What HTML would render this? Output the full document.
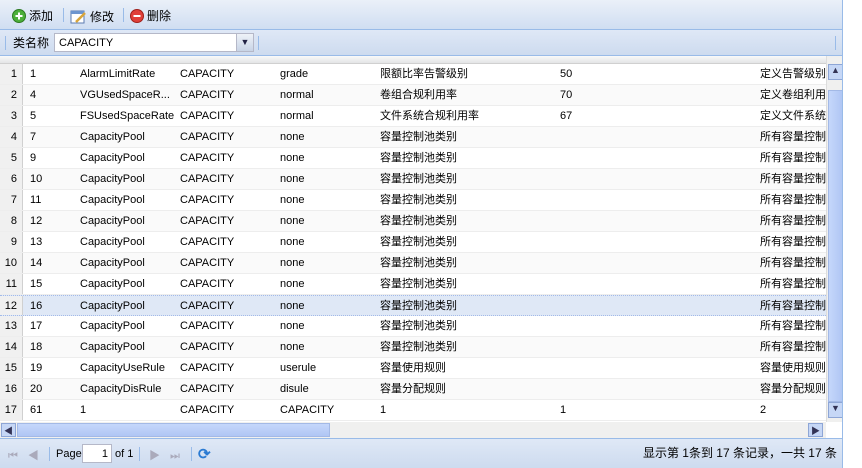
<!DOCTYPE html><html><head><meta charset="utf-8"><style>
*{box-sizing:border-box;margin:0;padding:0}
body{width:862px;height:468px;background:#fff;font:12px "Liberation Sans","Noto Sans CJK SC",sans-serif;position:relative;overflow:hidden}
.p{position:absolute;left:0;top:0;width:843px;height:468px;border-right:1px solid #99bbe8;overflow:hidden}
.tb{position:absolute;left:0;width:843px;background:linear-gradient(#dfe8f6,#cddbef);border-bottom:1px solid #99bbe8}
.sep{position:absolute;width:1px;height:14px;background:#99bbe8}
.btn{position:absolute;display:flex;align-items:center;gap:3px;font-size:12px;line-height:14px}
.hdr{position:absolute;left:0;top:56px;width:826px;height:8px;background:linear-gradient(#f9f9f9,#e3e4e6);border-bottom:1px solid #d0d0d0}
.row{position:absolute;left:0;width:826px;height:21px;border-bottom:1px solid #ededed;white-space:nowrap;font-size:11px;overflow:hidden}
.row span{position:absolute;top:3px;line-height:15px;height:15px}
.rn{position:absolute;left:0;top:0;width:23px;height:21px;background:#f0f0f0;border-right:1px solid #d0d0d0;text-align:right;padding-right:5px;padding-top:4px;line-height:13px}
.alt{background:#fafafa}
.sel{background:#dfe8f6;border-top:1px dotted #a3bae9;border-bottom:1px dotted #a3bae9}
</style></head><body><div class="p">
<div class="tb" style="top:0;height:30px;background:linear-gradient(#eaf0f8,#d0def2)">
<div class="btn" style="left:12px;top:9px"><svg width="14" height="14"><circle cx="7" cy="7" r="6.5" fill="#4caf3a" stroke="#2d7a22"/><path d="M7 3.5v7M3.5 7h7" stroke="#fff" stroke-width="2"/></svg>添加</div>
<div class="sep" style="left:63px;top:8px"></div>
<div class="btn" style="left:70px;top:9px"><svg width="17" height="15"><rect x="1" y="2" width="13" height="12" fill="#fff" stroke="#5b7bb0"/><rect x="1" y="2" width="13" height="3" fill="#6d95cf"/><path d="M6 13l9-9" stroke="#d9a53a" stroke-width="2.5"/></svg>修改</div>
<div class="sep" style="left:123px;top:8px"></div>
<div class="btn" style="left:130px;top:9px"><svg width="14" height="14"><circle cx="7" cy="7" r="6.5" fill="#e0403a" stroke="#a0201a"/><path d="M3.5 7h7" stroke="#fff" stroke-width="2"/></svg>删除</div>
</div>
<div class="tb" style="top:30px;height:26px">
<div class="sep" style="left:5px;top:6px"></div>
<div style="position:absolute;left:13px;top:6px;line-height:14px">类名称</div>
<div style="position:absolute;left:54px;top:3px;width:200px;height:19px;border:1px solid #b5b8c8;background:#fff;font-size:11px;padding:3px 4px;line-height:12px">CAPACITY</div>
<div style="position:absolute;left:236px;top:3px;width:18px;height:19px;background:linear-gradient(#eef2f8,#c8d4e6);border:1px solid #b5b8c8;text-align:center;font-size:9px;color:#224;padding-top:3px">▼</div>
<div class="sep" style="left:258px;top:6px"></div>
<div class="sep" style="left:835px;top:6px"></div>
</div>
<div class="hdr"></div>
<div id="g"></div>
<div style="position:absolute;left:826px;top:56px;width:17px;height:366px;background:#f0f0ef;border-left:1px solid #ddd">
<div style="position:absolute;left:1px;top:8px;width:15px;height:16px;background:#c6d7f6;border:1px solid #8ea6d6;font-size:9px;text-align:center;color:#335">▲</div>
<div style="position:absolute;left:1px;top:34px;width:15px;height:312px;background:linear-gradient(90deg,#c5d7fb,#b0c6f4);border:1px solid #a3b9e6"></div>
<div style="position:absolute;left:1px;top:346px;width:15px;height:16px;background:#c6d7f6;border:1px solid #8ea6d6;font-size:9px;text-align:center;color:#335">▼</div>
</div>
<div style="position:absolute;left:0;top:422px;width:826px;height:16px;background:#f0f0ef">
<div style="position:absolute;left:1px;top:1px;width:15px;height:14px;background:#c6d7f6;border:1px solid #8ea6d6;font-size:9px;text-align:center;color:#335">◀</div>
<div style="position:absolute;left:17px;top:1px;width:313px;height:14px;background:linear-gradient(#c5d7fb,#b0c6f4);border:1px solid #a3b9e6"></div>
<div style="position:absolute;left:808px;top:1px;width:15px;height:14px;background:#c6d7f6;border:1px solid #8ea6d6;font-size:9px;text-align:center;color:#335">▶</div>
</div>
<div class="tb" style="top:438px;height:30px;border-top:1px solid #99bbe8;border-bottom:none">
<div style="position:absolute;left:8px;top:8px;color:#aab;font-size:11px;letter-spacing:10px">⏮◀</div>
<div class="sep" style="left:49px;top:8px"></div>
<div style="position:absolute;left:56px;top:9px;font-size:11px">Page</div>
<div style="position:absolute;left:82px;top:5px;width:30px;height:19px;background:#fff;border:1px solid #b5b8c8;text-align:right;padding:3px 3px;font-size:11px">1</div>
<div style="position:absolute;left:115px;top:9px;font-size:11px">of 1</div>
<div class="sep" style="left:139px;top:8px"></div>
<div style="position:absolute;left:149px;top:8px;color:#aab;font-size:11px;letter-spacing:10px">▶⏭</div>
<div class="sep" style="left:191px;top:8px"></div>
<div style="position:absolute;left:198px;top:6px;color:#2a7ad2;font-size:15px;font-weight:bold">⟳</div>
<div style="position:absolute;right:6px;top:7px;font-size:12px;line-height:14px">显示第 1条到 17 条记录，一共 17 条</div>
</div>
</div>
<script>
var d=[[1,"AlarmLimitRate","grade","限额比率告警级别","50","定义告警级别"],[4,"VGUsedSpaceR...","normal","卷组合规利用率","70","定义卷组利用"],[5,"FSUsedSpaceRate","normal","文件系统合规利用率","67","定义文件系统"],[7,"CapacityPool","none","容量控制池类别","","所有容量控制"]];
for(var i=9;i<=18;i++)d.push([i,"CapacityPool","none","容量控制池类别","","所有容量控制"]);
d.push([19,"CapacityUseRule","userule","容量使用规则","","容量使用规则"]);
d.push([20,"CapacityDisRule","disule","容量分配规则","","容量分配规则"]);
d.push([61,"1","CAPACITY","1","1","2"]);
var h="";d.forEach(function(r,k){var c="row"+(k==11?" sel":(k%2?" alt":""));
h+='<div class="'+c+'" style="top:'+(64+k*21)+'px"><div class="rn">'+(k+1)+'</div><span style="left:30px">'+r[0]+'</span><span style="left:80px">'+r[1]+'</span><span style="left:180px">CAPACITY</span><span style="left:280px">'+r[2]+'</span><span style="left:380px">'+r[3]+'</span><span style="left:560px">'+r[4]+'</span><span style="left:760px;width:66px;overflow:hidden">'+r[5]+'</span></div>';});
document.getElementById("g").innerHTML=h;
</script>
</body></html>
